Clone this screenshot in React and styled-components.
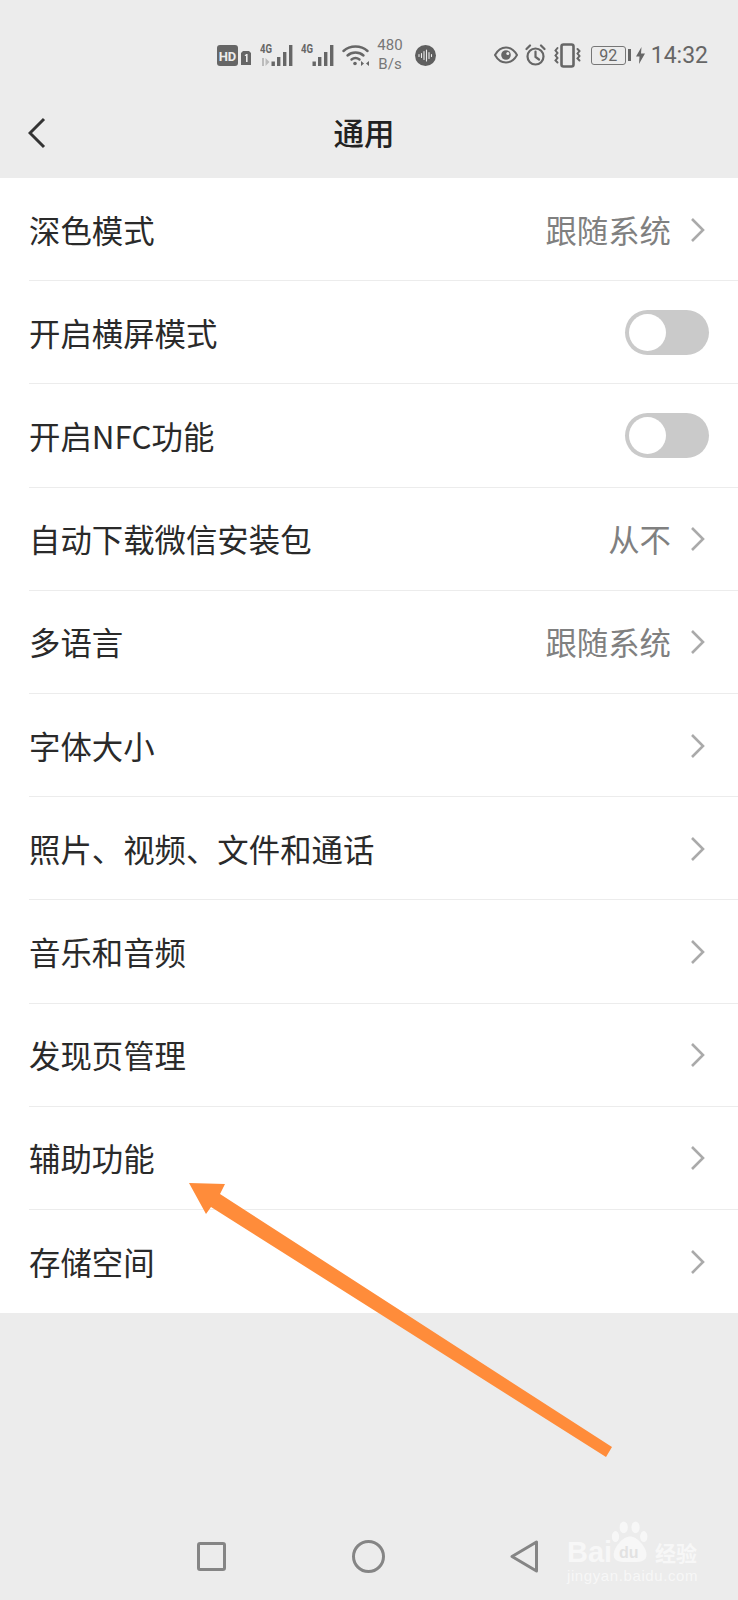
import React from 'react';
import styled, { createGlobalStyle } from 'styled-components';

const GlobalStyle = createGlobalStyle`
  html, body {
    margin: 0;
    padding: 0;
    background: #ececec;
  }
  body {
    font-family: "Noto Sans CJK SC", "Noto Sans", sans-serif;
  }
`;

const Page = styled.div`
  position: relative;
  width: 738px;
  height: 1600px;
  overflow: hidden;
  display: flex;
  flex-direction: column;
  background: #ececec;
`;

const StatusBar = styled.div`
  height: 90px;
  box-sizing: border-box;
  padding: 20px 30px 0 217px;
  display: flex;
  align-items: center;
  justify-content: space-between;
  color: #666;
`;

const StatusGroup = styled.div`
  display: flex;
  align-items: center;
`;

const Slot = styled.span`
  display: flex;
  margin-left: ${(p) => p.$gap || 0}px;
`;

const Speed = styled.div`
  margin-left: 7px;
  width: 28px;
  text-align: center;
  font-family: Roboto, sans-serif;
  font-size: 15px;
  line-height: 19px;
  color: #777;
`;

const Clock = styled.span`
  margin-left: 6px;
  font-family: Roboto, sans-serif;
  font-size: 23px;
  color: #666;
`;

const BatteryBox = styled.span`
  width: 35px;
  height: 19px;
  box-sizing: border-box;
  border: 1.5px solid #777;
  border-radius: 3px;
  margin-left: 10px;
  display: flex;
  align-items: center;
  justify-content: center;
  font-family: Roboto, sans-serif;
  font-size: 16px;
  color: #666;
`;

const BatteryNub = styled.span`
  width: 3px;
  height: 12px;
  margin-left: 2px;
  background: #666;
`;

const Header = styled.header`
  height: 88px;
  box-sizing: border-box;
  padding: 0 38px 0 28px;
  display: grid;
  grid-template-columns: 1fr auto 1fr;
  align-items: center;
`;

const BackIcon = styled.svg`
  margin-bottom: 3px;
`;

const Title = styled.h1`
  margin: 0 0 4px;
  font-size: 30.5px;
  font-weight: 500;
  color: #222;
`;

const List = styled.ul`
  margin: 0;
  padding: 0;
  list-style: none;
  background: #fff;
`;

const Row = styled.li`
  height: 103.2px;
  box-sizing: border-box;
  padding-left: 29px;
`;

const RowInner = styled.div`
  height: 100%;
  box-sizing: border-box;
  padding-right: 29px;
  display: flex;
  align-items: center;
  border-bottom: ${(p) => (p.$last ? 'none' : '1px solid #ececec')};
`;

const Label = styled.span`
  flex: 1;
  font-size: 31.4px;
  color: #2a2a2a;
`;

const Value = styled.span`
  font-size: 31.4px;
  color: #808080;
  margin-right: 19px;
`;

const Chevron = styled.svg`
  width: 16px;
  height: 26px;
  margin: 1px 3px 0 0;
`;

const Toggle = styled.span`
  width: 84px;
  height: 45px;
  box-sizing: border-box;
  padding: 4px;
  border-radius: 23px;
  background: #cacaca;
  display: flex;
`;

const Knob = styled.span`
  width: 37px;
  height: 37px;
  border-radius: 50%;
  background: #fff;
`;

const Spacer = styled.div`
  flex: 1;
`;

const NavBar = styled.nav`
  height: 88px;
  box-sizing: border-box;
  padding-left: 197px;
  display: flex;
  align-items: center;
`;

const NavSlot = styled.span`
  display: flex;
  margin-left: ${(p) => p.$gap || 0}px;
`;

const ArrowLayer = styled.svg`
  position: absolute;
  left: 0;
  top: 0;
  width: 738px;
  height: 1600px;
  pointer-events: none;
`;

const Watermark = styled.div`
  position: absolute;
  left: 567px;
  top: 1520px;
  width: 132px;
  color: #fff;
  opacity: 0.6;
`;

const MarkTop = styled.div`
  position: relative;
  height: 48px;
  display: flex;
  align-items: flex-end;
  font-family: "Liberation Sans", sans-serif;
  font-weight: 700;
  font-size: 29px;
  line-height: 32px;
`;

const MarkCjk = styled.span`
  position: absolute;
  right: 2px;
  bottom: 4px;
  font-size: 21px;
  line-height: 24px;
  font-family: "Noto Sans CJK SC", sans-serif;
  font-weight: 700;
`;

const MarkDu = styled.span`
  position: absolute;
  left: 52px;
  bottom: 6px;
  font-size: 16px;
  line-height: 18px;
  color: #dcdcdc;
`;

const Paw = styled.svg`
  position: absolute;
  left: 43px;
  top: 0;
`;

const MarkUrl = styled.div`
  font-family: "Liberation Sans", sans-serif;
  font-size: 15px;
  letter-spacing: 0.6px;
  line-height: 16px;
  white-space: nowrap;
`;

const rows = [
  { label: '深色模式', value: '跟随系统' },
  { label: '开启横屏模式', toggle: true },
  { label: '开启NFC功能', toggle: true },
  { label: '自动下载微信安装包', value: '从不' },
  { label: '多语言', value: '跟随系统' },
  { label: '字体大小' },
  { label: '照片、视频、文件和通话' },
  { label: '音乐和音频' },
  { label: '发现页管理' },
  { label: '辅助功能' },
  { label: '存储空间' },
];

function Signal({ tech }) {
  return (
    <svg width="35" height="32" viewBox="0 -4 35 32" fill="#666">
      <rect x="11.500" y="18.500" width="3.400" height="4.500" />
      <rect x="17" y="14" width="3.400" height="9" />
      <rect x="23" y="9" width="3.400" height="14" />
      <rect x="29" y="2" width="3.400" height="21" />
      <text x="0" y="10" fontFamily="Roboto, sans-serif" fontWeight="700" fontSize="13" textLength="12" lengthAdjust="spacingAndGlyphs">4G</text>
      {tech && <path d="M2 15h2v8H2zM5.500 15l4 4-4 4z" fill="#bbb" />}
    </svg>
  );
}

function StatusIcons() {
  return (
    <StatusBar>
      <StatusGroup>
        <svg width="21" height="21" viewBox="0 0 21 21">
          <rect width="21" height="21" rx="3" fill="#666" />
          <text x="10.500" y="15.500" textAnchor="middle" fill="#ececec" fontFamily="Roboto, sans-serif" fontWeight="700" fontSize="13">HD</text>
        </svg>
        <Slot $gap={3}>
          <svg width="10" height="14" viewBox="0 0 10 14" style={{ marginTop: 6 }}>
            <path d="M2 0h6l2 2v12H0V2z" fill="#666" />
            <path d="M5 3h1.600v8H5V5H3.500z" fill="#ececec" />
          </svg>
        </Slot>
        <Slot $gap={9}><Signal tech /></Slot>
        <Slot $gap={6}><Signal /></Slot>
        <Slot $gap={6}>
          <svg width="27" height="22" viewBox="0 0 27 22" fill="none" stroke="#666" strokeWidth="2.400" strokeLinecap="round">
            <path d="M1.500 7C8 1 19 1 25.500 7" />
            <path d="M5.500 11.500c4.500-4 11.500-4 16 0" />
            <path d="M9.500 15.500c2.300-1.800 5.700-1.800 8 0" />
            <circle cx="13" cy="19.500" r="1.800" fill="#666" stroke="none" />
            <path d="M19 17l3 2.500-3 2.500zM27 17l-3 2.500 3 2.500z" fill="#666" stroke="none" />
          </svg>
        </Slot>
        <Speed>480<br />B/s</Speed>
        <Slot $gap={11}>
          <svg width="21" height="21" viewBox="0 0 21 21">
            <circle cx="10.500" cy="10.500" r="10.500" fill="#5f5f5f" />
            <path d="M4 9.500v2M6.500 8.500v4M9 6.500v8M11.500 5v11M14 7.500v6M16.500 9.500v2" stroke="#ececec" strokeWidth="1.100" strokeLinecap="round" />
          </svg>
        </Slot>
      </StatusGroup>
      <StatusGroup>
        <svg width="24" height="18" viewBox="0 0 24 18" fill="none">
          <path d="M1 9c5.500-10 16.500-10 22 0-5.500 10-16.500 10-22 0z" stroke="#666" strokeWidth="2" />
          <circle cx="12" cy="9" r="4.800" fill="#666" />
          <circle cx="13.800" cy="7.500" r="1.500" fill="#ececec" />
        </svg>
        <Slot $gap={7}>
          <svg width="21" height="22" viewBox="0 0 21 22" fill="none" stroke="#666" strokeWidth="2.200" strokeLinecap="round">
            <circle cx="10.500" cy="12.500" r="8" />
            <path d="M10.500 7.500v5.500l3.500 2.500" />
            <path d="M1.500 5L5 1.500M19.500 5L16 1.500" />
          </svg>
        </Slot>
        <Slot $gap={7}>
          <svg width="28" height="25" viewBox="0 0 28 25" fill="none" stroke="#666" strokeLinecap="round">
            <rect x="8.500" y="1.500" width="12" height="22" rx="2" strokeWidth="2.600" />
            <path d="M4.500 5l-2 2.500 2 2.500-2 2.500 2 2.500-2 2.500 2 2" strokeWidth="2" />
            <path d="M24.500 6l2 2-2 2.500 2 2.500-2 2.500 2 2" strokeWidth="2" />
          </svg>
        </Slot>
        <BatteryBox>92</BatteryBox>
        <BatteryNub />
        <Slot $gap={5}>
          <svg width="9" height="17" viewBox="0 0 9 17">
            <path d="M5.500 0L0 9.500h3.500L3 17l6-10.500H5z" fill="#666" />
          </svg>
        </Slot>
        <Clock>14:32</Clock>
      </StatusGroup>
    </StatusBar>
  );
}

function SettingRow({ item, last }) {
  return (
    <Row>
      <RowInner $last={last}>
        <Label>{item.label}</Label>
        {item.value && <Value>{item.value}</Value>}
        {item.toggle ? (
          <Toggle><Knob /></Toggle>
        ) : (
          <Chevron viewBox="0 0 16 26" fill="none" stroke="#aaa" strokeWidth="2.600">
            <path d="M2 2l11 11L2 24" />
          </Chevron>
        )}
      </RowInner>
    </Row>
  );
}

export default function App() {
  return (
    <Page>
      <GlobalStyle />
      <StatusIcons />
      <Header>
        <BackIcon width="18" height="32" viewBox="0 0 18 32" fill="none" stroke="#333" strokeWidth="3">
          <path d="M16 2L2 16l14 14" />
        </BackIcon>
        <Title>通用</Title>
      </Header>
      <List>
        {rows.map((item, i) => (
          <SettingRow key={item.label} item={item} last={i === rows.length - 1} />
        ))}
      </List>
      <Spacer />
      <NavBar>
        <svg width="29" height="29" viewBox="0 0 29 29" fill="none" stroke="#858585" strokeWidth="3">
          <rect x="1.500" y="1.500" width="26" height="26" rx="1.500" />
        </svg>
        <NavSlot $gap={126}>
          <svg width="33" height="33" viewBox="0 0 33 33" fill="none" stroke="#858585" strokeWidth="3">
            <circle cx="16.500" cy="16.500" r="15" />
          </svg>
        </NavSlot>
        <NavSlot $gap={125}>
          <svg width="29" height="33" viewBox="0 0 29 33" fill="none" stroke="#858585" strokeWidth="3" strokeLinejoin="round">
            <path d="M26.500 2v29L2 16.500z" />
          </svg>
        </NavSlot>
      </NavBar>
      <ArrowLayer viewBox="0 0 738 1600">
        <path d="M189 1183L225 1184L220 1194L612 1447L606 1457L211 1207L206 1214z" fill="#ff8c3a" />
      </ArrowLayer>
      <Watermark>
        <MarkTop>
          Bai
          <Paw width="42" height="44" viewBox="0 0 46 46" fill="#fff">
            <ellipse cx="15" cy="7" rx="4.500" ry="6.500" />
            <ellipse cx="28" cy="7" rx="4.500" ry="6.500" />
            <ellipse cx="6" cy="17" rx="4" ry="6" />
            <ellipse cx="37" cy="17" rx="4" ry="6" />
            <path d="M22 17c8 0 18 12 18 20 0 8-8 8-18 8s-18 0-18-8c0-8 10-20 18-20z" />
          </Paw>
          <MarkDu>du</MarkDu>
          <MarkCjk>经验</MarkCjk>
        </MarkTop>
        <MarkUrl>jingyan.baidu.com</MarkUrl>
      </Watermark>
    </Page>
  );
}
